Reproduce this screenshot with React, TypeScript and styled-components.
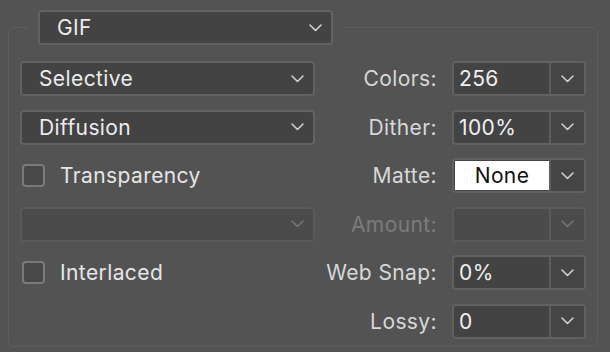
import React from "react";
import styled, { createGlobalStyle } from "styled-components";

const GlobalStyle = createGlobalStyle`
  html, body {
    margin: 0;
    padding: 0;
    background: #535353;
  }
  body {
    font-family: "Inter", "Liberation Sans", sans-serif;
    -webkit-font-smoothing: antialiased;
    letter-spacing: 0.4px;
  }
`;

const Panel = styled.div`
  width: 610px;
  height: 352px;
  padding: 10px 12px 0 8px;
  box-sizing: border-box;
`;

const Group = styled.fieldset`
  margin: 0;
  padding: 16px 11px 7px 11px;
  border: 1px solid #5d5d5d;
  border-radius: 5px;
  min-width: 0;
`;

const Legend = styled.legend`
  padding: 0 10px;
  margin-left: 8px;
`;

const Grid = styled.div`
  display: grid;
  grid-template-columns: 295px minmax(0, 1fr) 134px;
  grid-auto-rows: 35px;
  column-gap: 10px;
  row-gap: 13.5px;
  align-items: center;
`;

const SelectBox = styled.div<{ $width: number; $disabled?: boolean; $row?: number }>`
  box-sizing: border-box;
  width: ${(p) => p.$width}px;
  height: 35px;
  display: flex;
  align-items: center;
  justify-content: space-between;
  padding: 0 9px 0 17px;
  background: ${(p) => (p.$disabled ? "#4b4b4b" : "#434343")};
  border: 2px solid ${(p) => (p.$disabled ? "#5a5a5a" : "#626262")};
  border-radius: 4px;
  color: #ececec;
  font-size: 21px;
  grid-column: 1;
  grid-row: ${(p) => p.$row ?? "auto"};
`;

const CheckRow = styled.label<{ $row: number }>`
  grid-column: 1;
  grid-row: ${(p) => p.$row};
  display: flex;
  align-items: center;
  gap: 15px;
  padding-left: 2px;
  color: #e6e6e6;
  font-size: 21px;
`;

const Box = styled.span`
  box-sizing: border-box;
  width: 23px;
  height: 23px;
  border: 2px solid #7a7a7a;
  border-radius: 4px;
  background: #484848;
`;

const Label = styled.div<{ $row: number; $disabled?: boolean }>`
  grid-column: 2;
  grid-row: ${(p) => p.$row};
  margin-right: 5px;
  text-align: right;
  font-size: 21px;
  white-space: nowrap;
  color: ${(p) => (p.$disabled ? "#7c7c7c" : "#d8d8d8")};
`;

const Combo = styled.div<{ $row: number; $disabled?: boolean }>`
  grid-column: 3;
  grid-row: ${(p) => p.$row};
  box-sizing: border-box;
  height: 35px;
  display: flex;
  border: 2px solid ${(p) => (p.$disabled ? "#5a5a5a" : "#616161")};
  border-radius: 4px;
  background: ${(p) => (p.$disabled ? "#4b4b4b" : "#434343")};
  overflow: hidden;
`;

const ComboValue = styled.div<{ $white?: boolean }>`
  flex: 1;
  display: flex;
  align-items: center;
  justify-content: ${(p) => (p.$white ? "center" : "flex-start")};
  padding-left: ${(p) => (p.$white ? "0" : "5px")};
  background: ${(p) => (p.$white ? "#ffffff" : "transparent")};
  color: ${(p) => (p.$white ? "#111111" : "#f0f0f0")};
  font-size: 21px;
  margin: ${(p) => (p.$white ? "1px 0 1px 1px" : "0")};
`;

const ComboButton = styled.div<{ $disabled?: boolean }>`
  width: 33px;
  display: flex;
  align-items: center;
  justify-content: center;
  border-left: 2px solid ${(p) => (p.$disabled ? "#5a5a5a" : "#5e5e5e")};
  background: ${(p) => (p.$disabled ? "#4b4b4b" : "#454545")};
`;

const Chevron = ({ dim }: { dim?: boolean }) => (
  <svg width="13" height="8" viewBox="0 0 13 8">
    <polyline
      points="1,1 6.5,6.5 12,1"
      fill="none"
      stroke={dim ? "#767676" : "#cfcfcf"}
      strokeWidth="1.6"
      strokeLinecap="round"
      strokeLinejoin="round"
    />
  </svg>
);

const combos = [
  { label: "Colors:", value: "256" },
  { label: "Dither:", value: "100%" },
  { label: "Matte:", value: "None", white: true },
  { label: "Amount:", value: "", disabled: true },
  { label: "Web Snap:", value: "0%" },
  { label: "Lossy:", value: "0" },
];

export default function App() {
  return (
    <>
      <GlobalStyle />
      <Panel>
        <Group>
          <Legend>
            <SelectBox $width={295}>
              <span>GIF</span>
              <Chevron />
            </SelectBox>
          </Legend>
          <Grid>
            <SelectBox $width={295} $row={1}>
              <span>Selective</span>
              <Chevron />
            </SelectBox>
            <SelectBox $width={295} $row={2}>
              <span>Diffusion</span>
              <Chevron />
            </SelectBox>
            <CheckRow $row={3}>
              <Box />
              Transparency
            </CheckRow>
            <SelectBox $width={295} $row={4} $disabled>
              <span />
              <Chevron dim />
            </SelectBox>
            <CheckRow $row={5}>
              <Box />
              Interlaced
            </CheckRow>
            {combos.map((c, i) => (
              <React.Fragment key={c.label}>
                <Label $row={i + 1} $disabled={c.disabled}>
                  {c.label}
                </Label>
                <Combo $row={i + 1} $disabled={c.disabled}>
                  <ComboValue $white={c.white}>{c.value}</ComboValue>
                  <ComboButton $disabled={c.disabled}>
                    <Chevron dim={c.disabled} />
                  </ComboButton>
                </Combo>
              </React.Fragment>
            ))}
          </Grid>
        </Group>
      </Panel>
    </>
  );
}
